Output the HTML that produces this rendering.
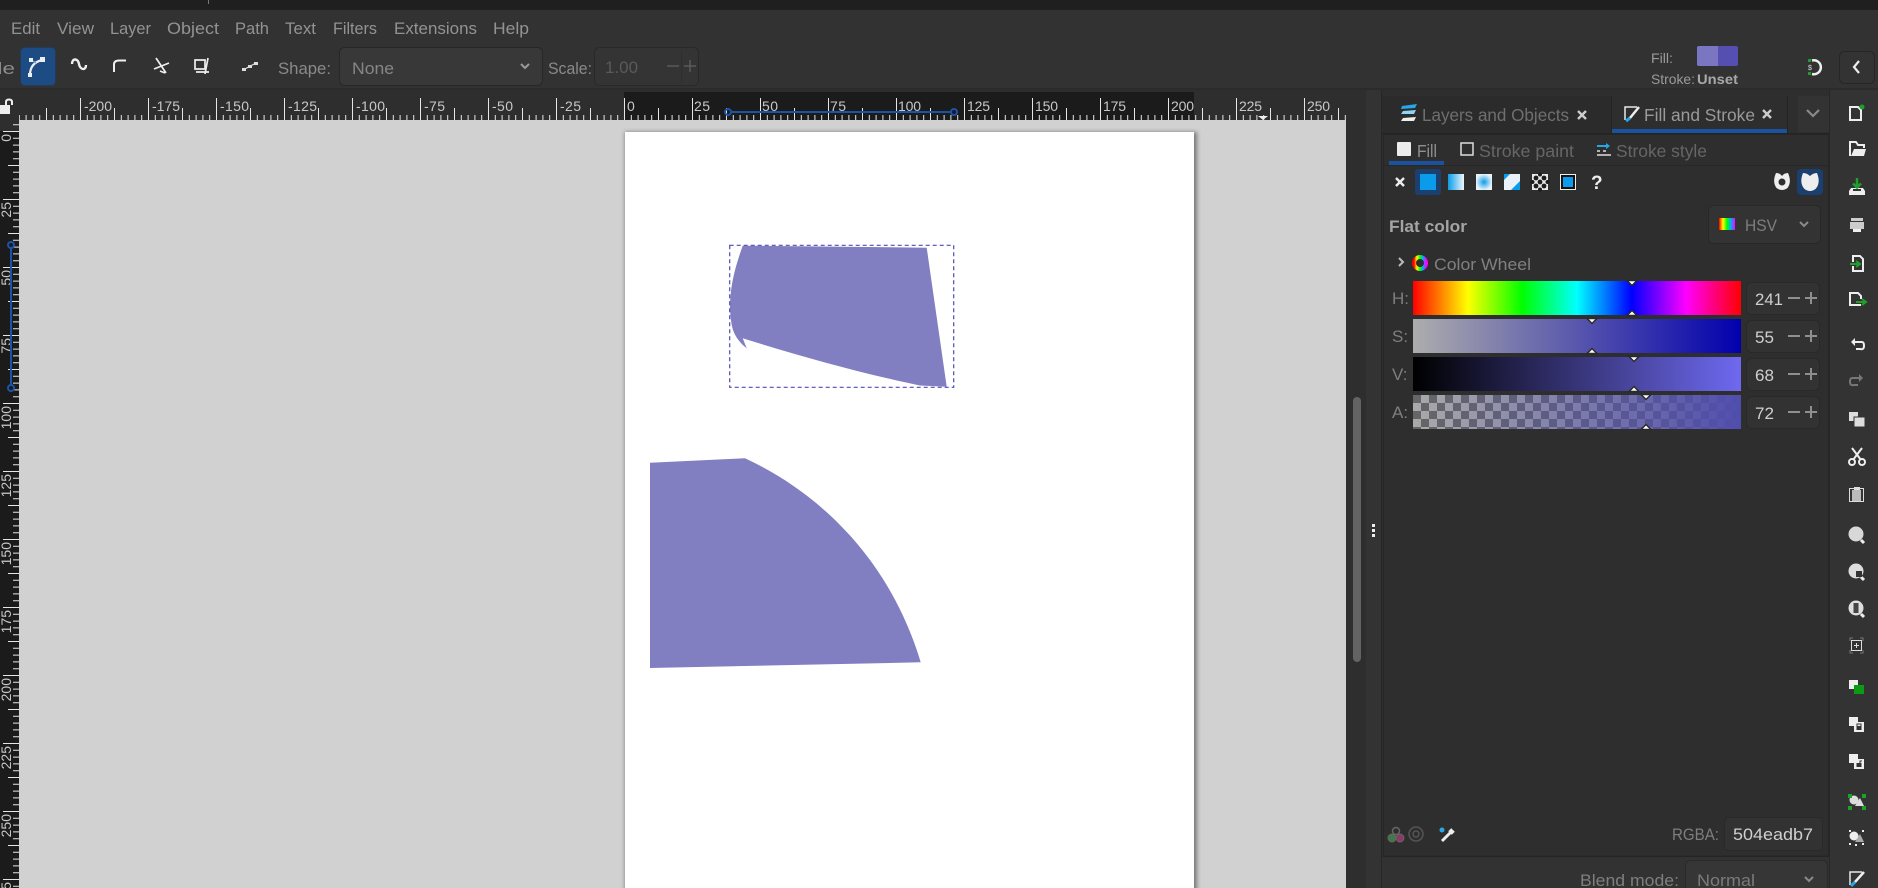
<!DOCTYPE html>
<html><head><meta charset="utf-8"><style>
html,body{margin:0;padding:0;background:#323232;overflow:hidden}
svg{display:block}
text{font-family:"Liberation Sans",sans-serif}
</style></head><body>
<svg xmlns="http://www.w3.org/2000/svg" width="1878" height="888" viewBox="0 0 1878 888">
<defs>
<pattern id="ht" patternUnits="userSpaceOnUse" x="624" y="92" width="68" height="28">
<g stroke="#e6e6e6" stroke-width="1"><path d="M.5 6V28M7.3 23V28M14.1 23V28M20.9 23V28M27.7 23V28M34.5 16V28M41.3 23V28M48.1 23V28M54.9 23V28M61.7 23V28"/></g>
</pattern>
<pattern id="vt" patternUnits="userSpaceOnUse" x="0" y="131" width="19" height="68">
<g stroke="#e6e6e6" stroke-width="1"><path d="M3 .5H19M13 7.3H19M13 14.1H19M13 20.9H19M13 27.7H19M8 34.5H19M13 41.3H19M13 48.1H19M13 54.9H19M13 61.7H19"/></g>
</pattern>
<pattern id="chk" patternUnits="userSpaceOnUse" x="1413" y="395" width="16" height="16">
<rect width="16" height="16" fill="#aaaaaa"/><rect width="8" height="8" fill="#666"/><rect x="8" y="8" width="8" height="8" fill="#666"/>
</pattern>
<linearGradient id="gh"><stop offset="0" stop-color="#f00"/><stop offset=".167" stop-color="#ff0"/><stop offset=".333" stop-color="#0f0"/><stop offset=".5" stop-color="#0ff"/><stop offset=".667" stop-color="#00f"/><stop offset=".833" stop-color="#f0f"/><stop offset="1" stop-color="#f00"/></linearGradient>
<linearGradient id="gs"><stop offset="0" stop-color="#adadad"/><stop offset="1" stop-color="#0200ad"/></linearGradient>
<linearGradient id="gv"><stop offset="0" stop-color="#000"/><stop offset="1" stop-color="#6e69f0"/></linearGradient>
<linearGradient id="ga"><stop offset="0" stop-color="#504ead" stop-opacity="0"/><stop offset="1" stop-color="#504ead" stop-opacity="1"/></linearGradient>
<linearGradient id="gl"><stop offset="0" stop-color="#0a9cea"/><stop offset="1" stop-color="#eef6fb"/></linearGradient>
<radialGradient id="gr"><stop offset="0" stop-color="#0a9cea"/><stop offset="1" stop-color="#e8f2f8"/></radialGradient>
<linearGradient id="grb"><stop offset="0" stop-color="#f00"/><stop offset=".25" stop-color="#ff0"/><stop offset=".5" stop-color="#0f0"/><stop offset=".75" stop-color="#0af"/><stop offset="1" stop-color="#f0f"/></linearGradient>
<filter id="sh" x="-5%" y="-5%" width="110%" height="110%"><feGaussianBlur stdDeviation="2"/></filter>
</defs>

<!-- chrome -->
<rect width="1878" height="888" fill="#323232"/>
<rect width="1878" height="10" fill="#1f1f1f"/>
<rect x="208" y="0" width="1" height="4" fill="#777"/>
<rect x="0" y="88" width="1878" height="2" fill="#2b2b2b"/>

<!-- menu -->
<g font-size="17" fill="#939393">
<text x="11" y="34" textLength="29" lengthAdjust="spacingAndGlyphs">Edit</text>
<text x="57" y="34" textLength="37" lengthAdjust="spacingAndGlyphs">View</text>
<text x="110" y="34" textLength="41" lengthAdjust="spacingAndGlyphs">Layer</text>
<text x="167" y="34" textLength="52" lengthAdjust="spacingAndGlyphs">Object</text>
<text x="235" y="34" textLength="34" lengthAdjust="spacingAndGlyphs">Path</text>
<text x="285" y="34" textLength="31" lengthAdjust="spacingAndGlyphs">Text</text>
<text x="333" y="34" textLength="44" lengthAdjust="spacingAndGlyphs">Filters</text>
<text x="394" y="34" textLength="83" lengthAdjust="spacingAndGlyphs">Extensions</text>
<text x="493" y="34" textLength="36" lengthAdjust="spacingAndGlyphs">Help</text>
</g>

<!-- tool row -->
<text x="-10" y="74" font-size="17" fill="#8c8c8c" textLength="25" lengthAdjust="spacingAndGlyphs">de</text>
<rect x="20.5" y="47.5" width="35" height="38" rx="4" fill="#1d4c84" stroke="#243a56"/>
<g fill="none" stroke="#eee" stroke-width="2">
<path d="M30 75C30 67 34 62 42 60" stroke-width="2.2"/>
<path d="M31 60L36 63" stroke="#7aa7d8" stroke-width="1.5"/>
<path d="M72 64C72 58 78 58 79 64S86 71 86 65" stroke-width="2.4"/>
<path d="M114 72V64.500Q114 60.500 119 60.500H126" stroke-width="2"/>
<path d="M156 58L166 73M154 69L169 63M160 71L165 73" stroke-width="1.700"/>
<path d="M195 60H205V69H195ZM208 58L205 74M196 72H209" stroke-width="1.700"/>
</g>
<rect x="40" y="57" width="5" height="5" fill="#eee"/>
<rect x="28" y="73" width="4" height="4" fill="#eee"/>
<rect x="29" y="58" width="4" height="4" fill="#eee"/>
<path d="M243 70L256 63" stroke="#ddd" stroke-width="1.200"/>
<rect x="242" y="68" width="4" height="3" fill="#ddd"/><rect x="248" y="65" width="4" height="3" fill="#ddd"/><rect x="254" y="62" width="4" height="3" fill="#ddd"/>
<text x="278" y="74" font-size="17" fill="#8a8a8a" textLength="53" lengthAdjust="spacingAndGlyphs">Shape:</text>
<rect x="339.500" y="47.500" width="203" height="38" rx="5" fill="#383838" stroke="#272727"/>
<text x="352" y="74" font-size="17" fill="#868686" textLength="42" lengthAdjust="spacingAndGlyphs">None</text>
<path d="M521 64L525 68 529 64" fill="none" stroke="#9a9a9a" stroke-width="2"/>
<text x="548" y="74" font-size="17" fill="#8a8a8a" textLength="44" lengthAdjust="spacingAndGlyphs">Scale:</text>
<rect x="594.500" y="47.500" width="104" height="38" rx="5" fill="#343434" stroke="#292929"/>
<text x="605" y="73" font-size="17" fill="#5a5a5a" textLength="33" lengthAdjust="spacingAndGlyphs">1.00</text>
<path d="M667 66H679M684 66H696M690 60V72" stroke="#5a5a5a" stroke-width="1.500" fill="none"/>
<rect x="681" y="50" width="1" height="33" fill="#2e2e2e"/>

<!-- fill indicator -->
<text x="1651" y="63" font-size="14" fill="#9a9a9a" textLength="22" lengthAdjust="spacingAndGlyphs">Fill:</text>
<rect x="1697" y="46" width="41" height="20" rx="2" fill="#544fb0"/>
<path d="M1699 46H1718V66H1699Q1697 66 1697 64V48Q1697 46 1699 46Z" fill="#7a76c2"/>
<text x="1651" y="84" font-size="14" fill="#9a9a9a" textLength="44" lengthAdjust="spacingAndGlyphs">Stroke:</text>
<text x="1697" y="84" font-size="14" font-weight="bold" fill="#a8a8a8" textLength="41" lengthAdjust="spacingAndGlyphs">Unset</text>
<path d="M1812 60.500A7 7 0 1 1 1812 74" fill="none" stroke="#eee" stroke-width="2.500"/>
<rect x="1808" y="59" width="3" height="3" fill="#1f9c2a"/><rect x="1808" y="72" width="3" height="3" fill="#1f9c2a"/>
<text x="1808" y="70" font-size="7" fill="#ddd">$</text>
<rect x="1839.500" y="51.500" width="35" height="32" rx="5" fill="#333" stroke="#262626"/>
<path d="M1859 61L1854 67 1859 73" fill="none" stroke="#eee" stroke-width="2.200"/>

<!-- rulers -->
<rect x="0" y="90" width="1346" height="30" fill="#2e2e2e"/>
<rect x="624" y="92" width="570" height="28" fill="#1b1b1b"/>
<rect x="19" y="92" width="1327" height="28" fill="url(#ht)"/>
<rect x="0" y="120" width="19" height="768" fill="#2e2e2e"/>
<rect x="0" y="131" width="19" height="757" fill="#1b1b1b"/>
<rect x="0" y="120" width="19" height="768" fill="url(#vt)"/>
<g font-size="14" fill="#c8c8c8" lengthAdjust="spacingAndGlyphs">
<text x="84" y="111" textLength="28">-200</text><text x="152" y="111" textLength="28">-175</text><text x="220" y="111" textLength="29">-150</text>
<text x="288" y="111" textLength="29">-125</text><text x="356" y="111" textLength="29">-100</text><text x="424" y="111" textLength="21">-75</text>
<text x="492" y="111" textLength="21">-50</text><text x="560" y="111" textLength="21">-25</text>
<text x="627" y="111">0</text><text x="694" y="111" textLength="16">25</text><text x="762" y="111" textLength="16">50</text><text x="830" y="111" textLength="16">75</text>
<text x="898" y="111" textLength="23">100</text><text x="967" y="111" textLength="23">125</text><text x="1035" y="111" textLength="23">150</text>
<text x="1103" y="111" textLength="23">175</text><text x="1171" y="111" textLength="23">200</text><text x="1239" y="111" textLength="23">225</text><text x="1307" y="111" textLength="23">250</text>
</g>
<g font-size="14" fill="#c8c8c8" text-anchor="end">
<text transform="translate(11,134) rotate(-90)">0</text>
<text transform="translate(11,202) rotate(-90)">25</text>
<text transform="translate(11,270) rotate(-90)">50</text>
<text transform="translate(11,338) rotate(-90)">75</text>
<text transform="translate(11,406) rotate(-90)">100</text>
<text transform="translate(11,474) rotate(-90)">125</text>
<text transform="translate(11,542) rotate(-90)">150</text>
<text transform="translate(11,610) rotate(-90)">175</text>
<text transform="translate(11,678) rotate(-90)">200</text>
<text transform="translate(11,746) rotate(-90)">225</text>
<text transform="translate(11,814) rotate(-90)">250</text>
<text transform="translate(11,882) rotate(-90)">275</text>
</g>
<!-- ruler selection markers -->
<g stroke="#1a54a8" fill="none" stroke-width="2">
<path d="M731 112H951"/><circle cx="728" cy="112" r="3"/><circle cx="954" cy="112" r="3"/>
<path d="M11 248V385"/><circle cx="11" cy="245" r="3"/><circle cx="11" cy="388" r="3"/>
</g>
<path d="M1258 116H1268L1263 120Z" fill="#eee"/>
<!-- lock -->
<rect x="0" y="105" width="10" height="9" fill="#eee"/>
<path d="M6 105V102Q6 99.500 9 99.500T12 102V105" fill="none" stroke="#eee" stroke-width="2"/>
<!-- monitor -->
<rect x="1351" y="97" width="12" height="9" rx="1" fill="none" stroke="#eee" stroke-width="1.500"/>
<rect x="1353" y="107" width="8" height="2" fill="#eee"/>

<!-- canvas -->
<rect x="19" y="120" width="1327" height="768" fill="#d1d1d1"/>
<rect x="625" y="132" width="572" height="760" fill="#555" filter="url(#sh)" opacity=".7"/>
<rect x="625" y="132" width="569" height="756" fill="#fff"/>
<path d="M742.700 245.700L926.700 247.700 946.700 386.700 920 385.500C860 373 800 356 742.700 338.300L746.700 348.300C740 343 735.500 337 733 330 730 320 729.500 305 730.500 296 732 278 737 262 742.700 245.700Z" fill="#817ec1"/>
<path d="M650 462.700L745 458.300C820 493 890 560 920.700 662.300L650 668Z" fill="#817ec1"/>
<rect x="729.700" y="245.300" width="224" height="142" fill="none" stroke="#4f4bb8" stroke-width="1.200" stroke-dasharray="4 3"/>

<!-- scrollbar + gutter -->
<rect x="1346" y="120" width="20" height="768" fill="#2e2e2e"/>
<rect x="1346" y="90" width="35" height="30" fill="#2e2e2e"/>
<rect x="1366" y="90" width="15" height="798" fill="#333"/>
<rect x="1353" y="397" width="8" height="265" rx="4" fill="#636363"/>
<rect x="1347" y="90" width="19" height="1" fill="#2e2e2e"/>
<g fill="#eee"><rect x="1372" y="524" width="3" height="3"/><rect x="1372" y="529" width="3" height="3"/><rect x="1372" y="534" width="3" height="3"/></g>
<rect x="1381" y="90" width="1" height="798" fill="#262626"/>

<!-- right dock -->
<rect x="1382" y="90" width="447" height="798" fill="#2e2e2e"/>
<rect x="1382" y="96" width="230" height="37" fill="#2b2b2b"/>
<rect x="1798" y="96" width="31" height="36" fill="#333"/>
<rect x="1612" y="96" width="175" height="37" fill="#2e2e2e"/>
<rect x="1382" y="133" width="447" height="1" fill="#242424"/>
<rect x="1612" y="129" width="175" height="4" fill="#1a52a0"/>
<rect x="1611" y="96" width="1" height="37" fill="#242424"/><rect x="1787" y="96" width="1" height="37" fill="#242424"/>
<!-- layers icon -->
<path d="M1402 106L1417 104 1415 108 1401 109Z" fill="#27a7e8"/>
<path d="M1403 111L1416 110 1414 114 1401 114Z" fill="#8fd4f5"/>
<path d="M1403 118L1416 117 1414 121 1401 121Z" fill="#eee"/>
<text x="1422" y="121" font-size="17.500" fill="#6f6f6f" textLength="147" lengthAdjust="spacingAndGlyphs">Layers and Objects</text>
<path d="M1578 111L1586 119M1586 111L1578 119" stroke="#ccc" stroke-width="2.400"/>
<!-- fill stroke icon -->
<path d="M1637 107H1625V120" fill="none" stroke="#e8e8e8" stroke-width="1.500"/>
<path d="M1639 107L1630 118" stroke="#eee" stroke-width="2.500"/>
<path d="M1630 118L1626 121" stroke="#27a7e8" stroke-width="3"/>
<text x="1644" y="121" font-size="17.500" fill="#9a9a9a" textLength="111" lengthAdjust="spacingAndGlyphs">Fill and Stroke</text>
<path d="M1763 110L1771 118M1771 110L1763 118" stroke="#ccc" stroke-width="2.400"/>
<path d="M1807 110L1813 116 1819 110" fill="none" stroke="#8a8a8a" stroke-width="2.200"/>

<!-- notebook -->
<rect x="1383.500" y="134.500" width="445" height="721.500" fill="#2e2e2e" stroke="#262626"/>
<rect x="1384" y="165" width="444" height="1" fill="#272727"/>
<rect x="1389" y="161" width="55" height="4" fill="#1a52a0"/>
<rect x="1397" y="142" width="14" height="14" rx="1" fill="#ececec"/>
<text x="1417" y="157" font-size="17.500" fill="#909090" textLength="20" lengthAdjust="spacingAndGlyphs">Fill</text>
<rect x="1461" y="143" width="12" height="12" fill="none" stroke="#ddd" stroke-width="1.500"/>
<text x="1479" y="157" font-size="17.500" fill="#666" textLength="95" lengthAdjust="spacingAndGlyphs">Stroke paint</text>
<path d="M1597 146H1608" stroke="#27a7e8" stroke-width="2"/><path d="M1606 143L1610 146 1606 149Z" fill="#27a7e8"/>
<path d="M1597 151H1600M1603 151H1606M1597 155H1611" stroke="#ddd" stroke-width="1.500"/>
<text x="1616" y="157" font-size="17.500" fill="#666" textLength="91" lengthAdjust="spacingAndGlyphs">Stroke style</text>

<!-- paint mode row -->
<path d="M1396 178L1404 186M1404 178L1396 186" stroke="#eee" stroke-width="2.400"/>
<rect x="1415" y="169" width="26" height="26" rx="3" fill="#1b3f6e"/>
<rect x="1420" y="174" width="16" height="16" fill="#0a9cea"/>
<rect x="1448" y="174" width="16" height="16" fill="url(#gl)"/>
<rect x="1476" y="174" width="16" height="16" fill="url(#gr)"/>
<rect x="1504" y="174" width="16" height="16" fill="#e8f2f8"/><path d="M1504 174H1510L1504 180ZM1520 190V181L1511 190Z" fill="#0a9cea"/>
<rect x="1532" y="174" width="16" height="16" fill="#e8e8e8"/>
<g fill="#1c1c1c"><circle cx="1536" cy="178" r="2.400"/><circle cx="1544" cy="178" r="2.400"/><circle cx="1540" cy="182" r="2.400"/><circle cx="1536" cy="186" r="2.400"/><circle cx="1544" cy="186" r="2.400"/><circle cx="1532.500" cy="182" r="2"/><circle cx="1547.500" cy="182" r="2"/><circle cx="1540" cy="174.500" r="2"/><circle cx="1540" cy="189.500" r="2"/></g>
<rect x="1560.500" y="174.500" width="15" height="15" fill="#111" stroke="#eee"/>
<rect x="1563" y="177" width="10" height="10" fill="#0a9cea"/>
<text x="1591" y="189" font-size="19" font-weight="bold" fill="#eee">?</text>
<rect x="1797" y="169" width="26" height="26" rx="4" fill="#1b3f6e"/>
<path d="M1776 173Q1780 173 1782 176 1784 173 1788 173 1792 182 1787.500 188 1782 192 1776.500 188 1772 182 1776 173Z" fill="#eee"/>
<circle cx="1782" cy="182" r="3.500" fill="#2e2e2e"/>
<path d="M1803 173Q1807 173 1810 176 1813 173 1817 173 1821 183 1815.500 189 1810 193 1804.500 189 1799 183 1803 173Z" fill="#eee"/>

<!-- flat color -->
<text x="1389" y="232" font-size="16.500" font-weight="bold" fill="#a4a4a4" textLength="78" lengthAdjust="spacingAndGlyphs">Flat color</text>
<rect x="1708.500" y="205.500" width="112" height="38" rx="5" fill="#333" stroke="#282828"/>
<rect x="1719" y="218" width="16" height="12" fill="url(#grb)"/>
<text x="1745" y="231" font-size="17" fill="#7e7e7e" textLength="32" lengthAdjust="spacingAndGlyphs">HSV</text>
<path d="M1800 222L1804 226 1808 222" fill="none" stroke="#8a8a8a" stroke-width="2"/>
<path d="M1399 258L1403 262 1399 266" fill="none" stroke="#bbb" stroke-width="2"/>
<circle cx="1420" cy="263" r="6" fill="none" stroke="url(#grb)" stroke-width="4"/>
<text x="1434" y="270" font-size="17" fill="#808080" textLength="97" lengthAdjust="spacingAndGlyphs">Color Wheel</text>

<!-- sliders -->
<rect x="1413" y="281" width="328" height="34" fill="url(#gh)"/>
<rect x="1413" y="319" width="328" height="34" fill="url(#gs)"/>
<rect x="1413" y="357" width="328" height="34" fill="url(#gv)"/>
<rect x="1413" y="395" width="328" height="34" fill="url(#chk)"/>
<rect x="1413" y="395" width="328" height="34" fill="url(#ga)"/>
<g fill="#fff" stroke="#2a2a2a" stroke-width="1.500">
<path d="M1627 280.500H1637L1632 285.500ZM1627 315.500H1637L1632 310.500Z"/>
<path d="M1587 318.500H1597L1592 323.500ZM1587 353.500H1597L1592 348.500Z"/>
<path d="M1629 356.500H1639L1634 361.500ZM1629 391.500H1639L1634 386.500Z"/>
<path d="M1641 394.500H1651L1646 399.500ZM1641 429.500H1651L1646 424.500Z"/>
</g>
<g font-size="17" fill="#7e7e7e">
<text x="1392" y="304">H:</text><text x="1392" y="342">S:</text><text x="1392" y="380">V:</text><text x="1392" y="418">A:</text>
</g>
<g fill="#323232" stroke="#292929">
<rect x="1746.500" y="282.500" width="73" height="32" rx="5"/>
<rect x="1746.500" y="320.500" width="73" height="32" rx="5"/>
<rect x="1746.500" y="358.500" width="73" height="32" rx="5"/>
<rect x="1746.500" y="396.500" width="73" height="32" rx="5"/>
</g>
<g font-size="17" fill="#cfcfcf">
<text x="1755" y="305" textLength="28" lengthAdjust="spacingAndGlyphs">241</text>
<text x="1755" y="343" textLength="19" lengthAdjust="spacingAndGlyphs">55</text>
<text x="1755" y="381" textLength="19" lengthAdjust="spacingAndGlyphs">68</text>
<text x="1755" y="419" textLength="19" lengthAdjust="spacingAndGlyphs">72</text>
</g>
<g stroke="#8f8f8f" stroke-width="2" fill="none">
<path d="M1788 298H1800M1805 298H1817M1811 292V304"/>
<path d="M1788 336H1800M1805 336H1817M1811 330V342"/>
<path d="M1788 374H1800M1805 374H1817M1811 368V380"/>
<path d="M1788 412H1800M1805 412H1817M1811 406V418"/>
</g>

<!-- bottom of panel -->
<circle cx="1396" cy="831" r="3.500" fill="none" stroke="#666" stroke-width="1.500"/>
<circle cx="1392" cy="838" r="4" fill="#3d7a45" stroke="#666"/>
<circle cx="1400" cy="838" r="4" fill="#8a3a66" stroke="#666"/>
<circle cx="1416" cy="834" r="7" fill="none" stroke="#555" stroke-width="1.500"/><circle cx="1416" cy="834" r="3" fill="none" stroke="#555" stroke-width="1.500"/>
<path d="M1442 841L1452 831" stroke="#eee" stroke-width="3"/><path d="M1450 833L1453 830" stroke="#eee" stroke-width="5"/>
<circle cx="1442" cy="830" r="2.500" fill="#27a7e8"/>
<text x="1672" y="840" font-size="17" fill="#7e7e7e" textLength="47" lengthAdjust="spacingAndGlyphs">RGBA:</text>
<rect x="1724.500" y="817.500" width="98" height="33" rx="4" fill="#323232" stroke="#292929"/>
<text x="1733" y="840" font-size="17" fill="#d0d0d0" textLength="80" lengthAdjust="spacingAndGlyphs">504eadb7</text>
<rect x="1383" y="856" width="446" height="1" fill="#242424"/>
<rect x="1382" y="857" width="447" height="31" fill="#323232"/>
<text x="1580" y="886" font-size="17" fill="#7e7e7e" textLength="99" lengthAdjust="spacingAndGlyphs">Blend mode:</text>
<rect x="1685.500" y="860.500" width="142" height="40" rx="5" fill="#363636" stroke="#2a2a2a"/>
<text x="1697" y="886" font-size="17" fill="#7a7a7a" textLength="58" lengthAdjust="spacingAndGlyphs">Normal</text>
<path d="M1805 877L1809 881 1813 877" fill="none" stroke="#8a8a8a" stroke-width="2"/>

<!-- right toolbar -->
<rect x="1829" y="90" width="49" height="798" fill="#333"/>
<rect x="1829" y="90" width="1" height="798" fill="#272727"/>
<g fill="none" stroke="#eee" stroke-width="2">
<path d="M1850 107H1858L1861 110V120H1850Z"/>
<path d="M1850 156V142H1856L1858 145H1864V148"/><path d="M1851 156L1854 149H1866L1864 156Z" fill="#eee" stroke="none"/>
<path d="M1851 188H1863L1865 191V195H1849V191Z" fill="#eee" stroke="none"/><rect x="1853" y="189" width="8" height="2" fill="#333" stroke="none"/>
<rect x="1851" y="218" width="12" height="3" fill="#ccc" stroke="none"/><rect x="1850" y="222" width="14" height="7" fill="#ccc" stroke="none"/><rect x="1853" y="229" width="8" height="3" fill="#eee" stroke="none"/>
<path d="M1853 262V256H1860L1863 259V271H1853V266"/>
<path d="M1861 305H1850V293H1858L1861 296V299"/>
<path d="M1852 342H1862Q1864 342 1864 346T1860 349H1856"/>
<path d="M1862 378H1852Q1850 378 1850 382T1854 385H1858" stroke="#777"/>
</g>
<circle cx="1862" cy="107" r="2.500" fill="#1fa02a"/>
<path d="M1857 178V187M1853 183.500L1857 187.500 1861 183.500" stroke="#1fa02a" stroke-width="2.500" fill="none"/>
<path d="M1850 264H1859M1856 261L1860 264 1856 267" stroke="#1fa02a" stroke-width="2" fill="none"/>
<path d="M1856 302H1865M1862 299L1866 302 1862 305" stroke="#1fa02a" stroke-width="2" fill="none"/>
<path d="M1851 342L1855 338V346Z" fill="#eee"/>
<path d="M1863 378L1859 374V382Z" fill="#777"/>
<rect x="1849" y="412" width="9" height="9" fill="#ddd"/><rect x="1854" y="417" width="11" height="10" fill="#ddd" stroke="#333"/>
<!-- scissors -->
<path d="M1852 448L1861 460M1862 448L1853 460" stroke="#eee" stroke-width="2"/>
<circle cx="1852" cy="462" r="3" fill="none" stroke="#eee" stroke-width="2"/><circle cx="1862" cy="462" r="3" fill="none" stroke="#eee" stroke-width="2"/>
<!-- paste -->
<rect x="1849.500" y="488.500" width="14" height="13" fill="none" stroke="#ddd"/><rect x="1852" y="490" width="9" height="11" fill="#bbb"/><rect x="1854" y="487" width="6" height="3" fill="#ddd"/>
<!-- zoom icons -->
<g stroke="#eee" stroke-width="3" fill="none"><path d="M1861 540L1864 543M1861 577L1864 580M1861 614L1864 617"/></g>
<circle cx="1856" cy="534" r="7.500" fill="#d8d8d8"/>
<circle cx="1856" cy="571" r="7.500" fill="#ddd"/><rect x="1856" y="571" width="6" height="6" fill="#333"/>
<circle cx="1856" cy="608" r="7.500" fill="#ddd"/><rect x="1853.500" y="603" width="5" height="10" fill="#444"/>
<rect x="1851.500" y="640.500" width="10" height="10" fill="none" stroke="#ddd"/><path d="M1854 645.500H1859M1856.500 643V648" stroke="#ddd"/>
<path d="M1850 641V638H1853M1863 641V638H1860M1850 650V653H1853M1863 650V653H1860" stroke="#777" fill="none"/>
<!-- select same -->
<rect x="1849" y="680" width="9" height="9" fill="#eee"/><rect x="1854" y="685" width="10" height="9" fill="#0a9a14"/>
<rect x="1849" y="717" width="9" height="9" fill="#eee"/><rect x="1854" y="722" width="10" height="10" fill="#eee"/><rect x="1856.500" y="726" width="5" height="4" fill="#333"/><path d="M1857 726V724H1861V726" stroke="#333" fill="none"/>
<rect x="1849" y="754" width="9" height="9" fill="#eee"/><rect x="1854" y="759" width="10" height="10" fill="#eee"/><rect x="1856.500" y="763" width="5" height="4" fill="#333"/><path d="M1860 763V761H1862" stroke="#333" fill="none"/>
<!-- group -->
<circle cx="1854" cy="800" r="4.500" fill="#ddd"/><path d="M1860 798L1864 806H1855Z" fill="#ddd"/>
<g fill="#1fa02a"><rect x="1848" y="794" width="4" height="4"/><rect x="1862" y="794" width="4" height="4"/><rect x="1848" y="806" width="4" height="4"/><rect x="1862" y="806" width="4" height="4"/></g>
<circle cx="1854" cy="836" r="4.500" fill="#eee"/><path d="M1860 834L1864 842H1855Z" fill="#aaa"/>
<g fill="#eee"><rect x="1849" y="830" width="2" height="2"/><rect x="1862" y="830" width="2" height="2"/><rect x="1849" y="843" width="2" height="2"/><rect x="1855" y="844" width="2" height="2"/><rect x="1862" y="843" width="2" height="2"/></g>
<!-- fill stroke -->
<path d="M1862 872H1850V885" fill="none" stroke="#e8e8e8" stroke-width="1.500"/>
<path d="M1864 872L1855 882" stroke="#eee" stroke-width="2.500"/><path d="M1855 882L1851 886" stroke="#27a7e8" stroke-width="3"/>
</svg>
</body></html>
